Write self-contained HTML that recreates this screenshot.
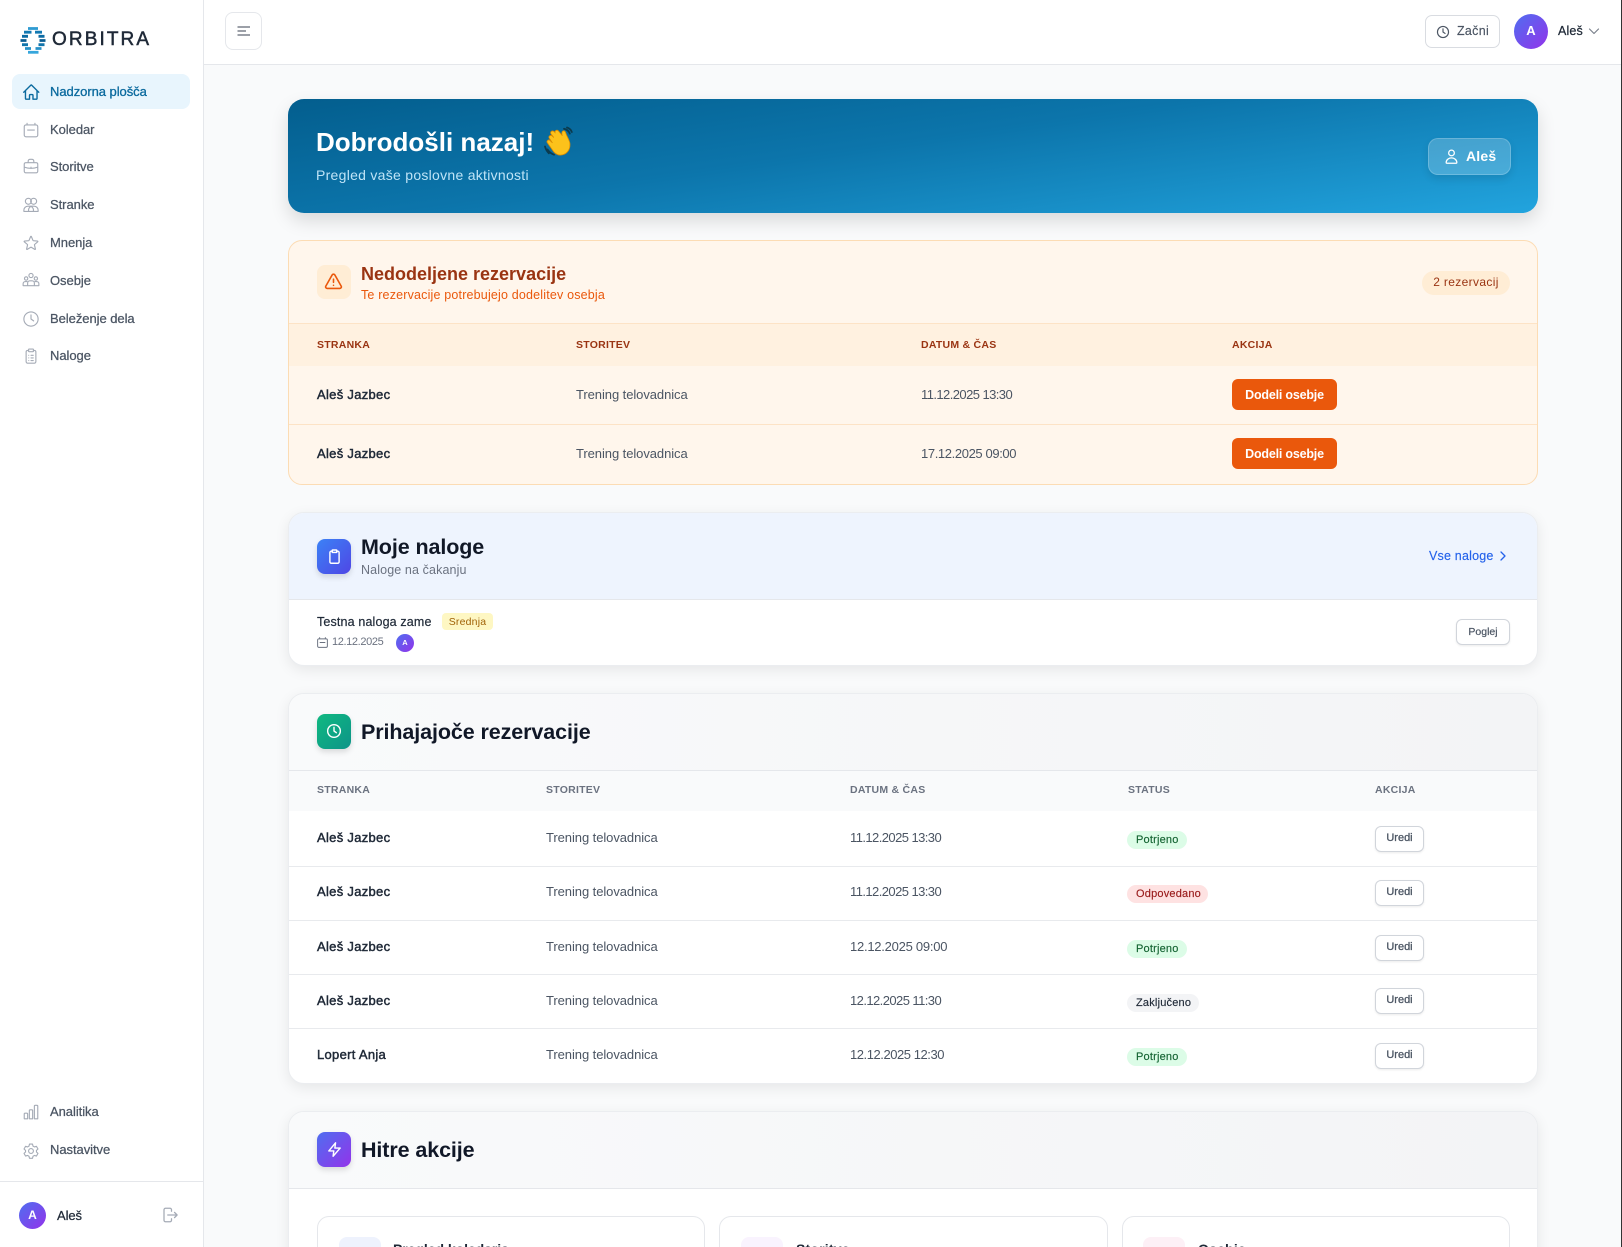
<!DOCTYPE html>
<html lang="sl"><head><meta charset="utf-8"><title>Orbitra</title>
<style>
*{box-sizing:border-box}
html,body{margin:0;padding:0;width:1622px;height:1247px;overflow:hidden;background:#f9fafb;font-family:"Liberation Sans",sans-serif}
#p{position:relative;width:1622px;height:1247px;overflow:hidden}
.a{position:absolute}
.t{position:absolute;white-space:nowrap;line-height:20px;height:20px}
.n{font-size:13px;color:#4b5563;left:50px;letter-spacing:-.05px;font-weight:400;-webkit-text-stroke:.25px #4b5563}
svg{position:absolute;fill:none;stroke-linecap:round;stroke-linejoin:round}
.i{stroke:#a5abb6;stroke-width:1.500}
.card{position:absolute;left:288px;width:1250px;background:#fff;border:1px solid #ebedf0;border-radius:16px;box-shadow:0 4px 14px rgba(0,0,0,.08);overflow:hidden}
.ib{position:absolute;left:317px;width:34px;height:35px;border-radius:8px;box-shadow:0 3px 6px rgba(0,0,0,.13)}
.h2{font-size:21.500px;font-weight:700;color:#111827;left:361px;letter-spacing:-.1px}
.th{font-size:10.500px;font-weight:700;letter-spacing:.25px;color:#6b7280}
.b{font-size:13px;font-weight:400;color:#1f2937;letter-spacing:.3px;left:317px;-webkit-text-stroke:.45px #1f2937}
.c{font-size:13px;color:#4b5563;letter-spacing:-.07px}
.d{position:absolute;height:1px;left:289px;width:1248px;background:#e8eaed}
.pill{position:absolute;left:1127px;height:18px;border-radius:9px;font-size:11px;line-height:18px;padding-left:9px;letter-spacing:.2px;-webkit-text-stroke:.15px currentColor}
.u{position:absolute;left:1375px;width:49px;height:26px;background:#fff;border:1px solid #d1d5db;border-radius:6px;font-size:11px;color:#4b5563;-webkit-text-stroke:.3px #4b5563;text-align:center;line-height:22px;box-shadow:0 1px 2px rgba(0,0,0,.08)}
.o{position:absolute;left:1232px;width:105px;height:31px;background:#ea580c;border-radius:6px;color:#fff;font-size:12.500px;font-weight:700;text-align:center;line-height:32px;letter-spacing:-.2px}
.q{position:absolute;top:1216px;height:60px;background:#fff;border:1px solid #e5e7eb;border-radius:12px}
.qi{position:absolute;top:1237px;width:42px;height:42px;border-radius:8px}
.qt{font-size:14px;font-weight:700;color:#1f2937;top:1239px}
</style></head><body><div id="p">
<svg width="0" height="0"><defs>
<symbol id="home" viewBox="0 0 24 24"><path d="M2.250 12l8.954-8.955c.44-.439 1.152-.439 1.591 0L21.750 12M4.500 9.750v10.125c0 .621.504 1.125 1.125 1.125H9.750v-4.875c0-.621.504-1.125 1.125-1.125h2.250c.621 0 1.125.504 1.125 1.125V21h4.125c.621 0 1.125-.504 1.125-1.125V9.750"/></symbol>
<symbol id="cal" viewBox="0 0 24 24"><path d="M6.750 3v2.250M17.250 3v2.250M5.250 5.250h13.500A2.250 2.250 0 0121 7.500v11.250A2.250 2.250 0 0118.750 21H5.250A2.250 2.250 0 013 18.750V7.500a2.250 2.250 0 012.250-2.250zM7.500 12h9"/></symbol>
<symbol id="brief" viewBox="0 0 24 24"><path d="M5 7.500h14a2 2 0 012 2V19a2 2 0 01-2 2H5a2 2 0 01-2-2V9.500a2 2 0 012-2zM8.250 7.500V5.500a2.500 2.500 0 012.500-2.500h2.500a2.500 2.500 0 012.500 2.500v2M3 13.500c5.500 2 12.500 2 18 0M12 13.500v.5"/></symbol>
<symbol id="users" viewBox="0 0 24 24"><circle cx="8.500" cy="7" r="4"/><circle cx="15.500" cy="7" r="4"/><path d="M2.500 20.500v-1.500a5.500 5.500 0 015.500-5.500h8a5.500 5.500 0 015.500 5.500v1.500zM12 14a5 5 0 00-3 6.500M12 14a5 5 0 013 6.500"/></symbol>
<symbol id="star" viewBox="0 0 24 24"><path d="M11.480 3.500a.56.56 0 011.040 0l2.130 5.110a.56.56 0 00.470.350l5.520.440c.500.040.700.660.320.990l-4.200 3.600a.56.56 0 00-.180.550l1.280 5.380a.56.56 0 01-.840.610l-4.730-2.880a.56.56 0 00-.580 0l-4.730 2.880a.56.56 0 01-.840-.610l1.280-5.380a.56.56 0 00-.180-.550l-4.200-3.600a.56.56 0 01.320-.990l5.520-.440a.56.56 0 00.470-.350z"/></symbol>
<symbol id="team" viewBox="0 0 24 24"><circle cx="12" cy="6" r="2.800"/><circle cx="5.500" cy="10" r="2.200"/><circle cx="18.500" cy="10" r="2.200"/><path d="M7.500 19.500v-3.500a3 3 0 013-3h3a3 3 0 013 3v3.500zM1.500 19.500v-2.500a3 3 0 013-3h2M22.500 19.500v-2.500a3 3 0 00-3-3h-2M1.500 19.500h21"/></symbol>
<symbol id="clock" viewBox="0 0 24 24"><circle cx="12" cy="12" r="9.500"/><path d="M12 6.500V12l3.500 2.500"/></symbol>
<symbol id="clip" viewBox="0 0 24 24"><path d="M9 4.500H7.500a2 2 0 00-2 2V19.500a2 2 0 002 2h9a2 2 0 002-2V6.500a2 2 0 00-2-2H15M9.500 2.800h5a.8.8 0 01.8.8v1.900a.8.8 0 01-.8.8h-5a.8.8 0 01-.8-.8V3.600a.8.8 0 01.8-.8z"/></symbol>
<symbol id="clipl" viewBox="0 0 24 24"><path d="M9 4.500H7.500a2 2 0 00-2 2V19.500a2 2 0 002 2h9a2 2 0 002-2V6.500a2 2 0 00-2-2H15M9.500 2.800h5a.8.8 0 01.8.8v1.900a.8.8 0 01-.8.8h-5a.8.8 0 01-.8-.8V3.600a.8.8 0 01.8-.8zM9 11h.01M12 11h3M9 14.500h.01M12 14.500h3M9 18h.01M12 18h3"/></symbol>
<symbol id="bars" viewBox="0 0 24 24"><path d="M3 14.500a1 1 0 011-1h2.500a1 1 0 011 1V21H3zM9.800 10a1 1 0 011-1h2.400a1 1 0 011 1v11H9.800zM16.500 4a1 1 0 011-1H20a1 1 0 011 1v17h-4.500z"/></symbol>
<symbol id="gear" viewBox="0 0 24 24"><path d="M10 2.800h4l.7 2.700 1.900 1.100 2.700-.8 2 3.500-2 1.900v2.100l2 1.900-2 3.500-2.700-.8-1.900 1.100-.7 2.700h-4l-.7-2.700-1.900-1.100-2.700.8-2-3.500 2-1.900v-2.100l-2-1.900 2-3.500 2.700.8 1.900-1.100z"/><circle cx="12" cy="12" r="3.200"/></symbol>
<symbol id="out" viewBox="0 0 24 24"><path d="M14 7V5a2 2 0 00-2-2H6a2 2 0 00-2 2v14a2 2 0 002 2h6a2 2 0 002-2v-2M9 12h12.500M18 8.500l3.500 3.500-3.500 3.500"/></symbol>
<symbol id="user" viewBox="0 0 24 24"><circle cx="12" cy="7" r="4"/><path d="M4.500 20.500a7.500 6.500 0 0115 0c0 .5-.5 1-1 1h-13c-.5 0-1-.5-1-1z"/></symbol>
</defs></svg>

<!-- sidebar -->
<div class="a" style="left:0;top:0;width:204px;height:1247px;background:#fff;border-right:1px solid #e5e7eb"></div>
<svg style="left:20px;top:27px" width="26" height="27" viewBox="0 0 26 27">
<g stroke-width="2.800" style="stroke-linecap:butt">
<path stroke="#2f9bd2" style="stroke-linecap:butt" d="M8 1.500h10"/>
<path stroke="#1379b2" style="stroke-linecap:butt" d="M4 5.200h7.500M15 5.200h7"/>
<path stroke="#0d6ba3" style="stroke-linecap:butt" d="M2 9.300h6M18.500 9.300h6"/>
<path stroke="#0a5d92" style="stroke-linecap:butt" d="M.5 13.500h6M19.500 13.500h6"/>
<path stroke="#1275ab" style="stroke-linecap:butt" d="M2 17.700h6M18.500 17.700h6"/>
<path stroke="#2590c8" style="stroke-linecap:butt" d="M5 21.500h6M15.500 21.500h6"/>
<path stroke="#36a6dc" style="stroke-linecap:butt" d="M8 25.300h10.500"/>
</g></svg>
<div class="t" style="left:52px;top:29px;line-height:22px;height:22px;font-size:19px;font-weight:400;letter-spacing:2.100px;color:#1f2937;-webkit-text-stroke:.5px #1f2937">ORBITRA</div>

<div class="a" style="left:12px;top:74px;width:178px;height:35px;background:#e8f5fd;border-radius:8px"></div>
<svg style="left:22px;top:83px;stroke:#0b6a9e;stroke-width:1.800" width="18.500" height="18.500"><use href="#home"/></svg>
<div class="t n" style="top:82px;color:#0b6a9e;-webkit-text-stroke:.3px #0b6a9e">Nadzorna plošča</div>

<svg class="i" style="left:22px;top:121px" width="18" height="18"><use href="#cal"/></svg>
<div class="t n" style="top:120px">Koledar</div>
<svg class="i" style="left:22px;top:157px" width="18" height="18"><use href="#brief"/></svg>
<div class="t n" style="top:157px">Storitve</div>
<svg class="i" style="left:22px;top:196px" width="18" height="18"><use href="#users"/></svg>
<div class="t n" style="top:195px">Stranke</div>
<svg class="i" style="left:22px;top:234px" width="18" height="18"><use href="#star"/></svg>
<div class="t n" style="top:233px">Mnenja</div>
<svg class="i" style="left:22px;top:271px" width="18" height="18"><use href="#team"/></svg>
<div class="t n" style="top:271px">Osebje</div>
<svg class="i" style="left:22px;top:310px" width="18" height="18"><use href="#clock"/></svg>
<div class="t n" style="top:309px">Beleženje dela</div>
<svg class="i" style="left:22px;top:347px" width="18" height="18"><use href="#clipl"/></svg>
<div class="t n" style="top:346px">Naloge</div>

<svg class="i" style="left:22px;top:1103px" width="18" height="18"><use href="#bars"/></svg>
<div class="t n" style="top:1102px">Analitika</div>
<svg class="i" style="left:22px;top:1142px" width="18" height="18"><use href="#gear"/></svg>
<div class="t n" style="top:1140px">Nastavitve</div>
<div class="a" style="left:0;top:1181px;width:203px;height:1px;background:#e5e7eb"></div>
<div class="a" style="left:19px;top:1202px;width:27px;height:27px;border-radius:50%;background:linear-gradient(135deg,#4f6ef0,#9333ea);color:#fff;font-size:12px;font-weight:700;text-align:center;line-height:27px">A</div>
<div class="t" style="left:57px;top:1206px;font-size:13px;color:#1f2937;letter-spacing:-.1px;-webkit-text-stroke:.25px #1f2937">Aleš</div>
<svg class="i" style="left:161px;top:1206px;stroke-width:1.700" width="18" height="18"><use href="#out"/></svg>

<!-- top bar -->
<div class="a" style="left:204px;top:0;width:1418px;height:65px;background:#fff;border-bottom:1px solid #e5e7eb"></div>
<div class="a" style="left:225px;top:12px;width:37px;height:38px;background:#fff;border:1px solid #e5e7eb;border-radius:8px"></div>
<svg style="left:236px;top:25px;stroke:#7b818c;stroke-width:1.500" width="16" height="13"><path style="stroke-linecap:butt" d="M1.500 2h12.500M1.500 6h8.500M1.500 10h12.500"/></svg>
<div class="a" style="left:1425px;top:15px;width:75px;height:33px;background:#fff;border:1px solid #d9dce1;border-radius:7px"></div>
<svg style="left:1436px;top:25px;stroke:#4b5563;stroke-width:2" width="14" height="14"><use href="#clock"/></svg>
<div class="t" style="left:1457px;top:21px;font-size:12.500px;color:#4b5563;letter-spacing:.3px;-webkit-text-stroke:.15px #4b5563">Začni</div>
<div class="a" style="left:1514px;top:14px;width:34px;height:35px;border-radius:50%;background:linear-gradient(135deg,#4f6ef0,#9333ea);color:#fff;font-size:13px;font-weight:700;text-align:center;line-height:34px">A</div>
<div class="t" style="left:1558px;top:21px;font-size:12.500px;color:#1f2937;letter-spacing:.15px;-webkit-text-stroke:.25px #1f2937">Aleš</div>
<svg style="left:1588px;top:27px;stroke:#7b818c;stroke-width:1.200" width="12" height="9"><path d="M1.500 2l4.500 4.500L10.500 2"/></svg>

<!-- hero -->
<div class="a" style="left:288px;top:99px;width:1250px;height:114px;border-radius:16px;background:linear-gradient(172deg,#035e8e 0%,#0c75ab 45%,#22a4de 100%);box-shadow:0 8px 18px rgba(0,0,0,.13)"></div>
<div class="t" style="left:316px;top:130px;height:24px;line-height:24px;font-size:26px;font-weight:700;color:#fff;letter-spacing:0">Dobrodošli nazaj!</div>
<svg style="left:543px;top:126px" width="31" height="32" viewBox="0 0 31 32">
<path d="M4.500 23.500c2 3 4 4.300 6.500 5.200M2 20.500c.8 3 2 4.800 3.800 6.800M21 2.800c2.700.4 4.800 2.200 5.800 4.800M24 1.500c2.200.7 4 2.200 4.800 4.500" stroke="#0b3b4e" stroke-width="1.800"/>
<path d="M6.500 12.500c-1.800-2 .9-4 2.700-2.500l1.400 1.300-2.500-3.200c-1.700-2.200 1.300-4.300 3.200-2.300l.9 1.100c-1-2 1.800-3.800 3.400-1.800l3.600 4.400c-.7-2.400-.5-4.100 1-4.600 1.400-.4 2.200.8 2.600 2.200 1.100 3.600 3.700 6.800 4.100 10.300.5 4.900-1.600 9-5.700 10.900-3.800 1.600-7.600.7-10.500-2.500L4.500 17c-1.500-1.900.7-4 2.600-2.400l2.200 2.100z" fill="#fcc21b" stroke="#d98a00" stroke-width=".8"/>
</svg>
<div class="t" style="left:316px;top:165px;font-size:14px;color:#bfe4f7;letter-spacing:.28px">Pregled vaše poslovne aktivnosti</div>
<div class="a" style="left:1428px;top:138px;width:83px;height:37px;border-radius:10px;background:rgba(255,255,255,.2);border:1px solid rgba(255,255,255,.2);box-shadow:0 4px 8px rgba(0,0,0,.1)"></div>
<svg style="left:1443px;top:148px;stroke:#fff;stroke-width:1.800" width="17" height="17"><use href="#user"/></svg>
<div class="t" style="left:1466px;top:146px;font-size:14px;font-weight:700;color:#fff;letter-spacing:.2px">Aleš</div>

<!-- alert card -->
<div class="a" style="left:288px;top:240px;width:1250px;height:245px;background:#fff6ec;border:1px solid #fcdcb4;border-radius:14px"></div>
<div class="a" style="left:317px;top:265px;width:34px;height:34px;border-radius:8px;background:#ffedd5"></div>
<svg style="left:324px;top:272px;stroke:#ea580c;stroke-width:2" width="19" height="19" viewBox="0 0 24 24"><path d="M12 9v4M12 16.800h.01M10.300 3.700L2.300 17.800c-.8 1.300.2 3 1.700 3h16c1.500 0 2.500-1.700 1.700-3L13.700 3.700c-.8-1.300-2.600-1.300-3.400 0z"/></svg>
<div class="t" style="left:361px;top:264px;font-size:18px;font-weight:700;color:#9a3412;letter-spacing:0">Nedodeljene rezervacije</div>
<div class="t" style="left:361px;top:285px;font-size:12.500px;color:#ea580c;letter-spacing:.18px">Te rezervacije potrebujejo dodelitev osebja</div>
<div class="a" style="left:1422px;top:271px;width:88px;height:24px;border-radius:12px;background:#ffedd5;color:#9a3412;font-size:12px;line-height:23px;text-align:center;letter-spacing:.35px">2 rezervacij</div>
<div class="a" style="left:289px;top:323px;width:1248px;height:43px;background:#fff1e0;border-top:1px solid #fde3c6"></div>
<div class="t th" style="left:317px;top:335px;color:#9a3412">STRANKA</div>
<div class="t th" style="left:576px;top:335px;color:#9a3412">STORITEV</div>
<div class="t th" style="left:921px;top:335px;color:#9a3412">DATUM &amp; ČAS</div>
<div class="t th" style="left:1232px;top:335px;color:#9a3412">AKCIJA</div>
<div class="t b" style="top:385px">Aleš Jazbec</div>
<div class="t c" style="left:576px;top:385px">Trening telovadnica</div>
<div class="t c" style="left:921px;top:385px;letter-spacing:-.57px">11.12.2025 13:30</div>
<div class="o" style="top:379px">Dodeli osebje</div>
<div class="a" style="left:289px;top:424px;width:1248px;height:1px;background:#fde3c6"></div>
<div class="t b" style="top:444px">Aleš Jazbec</div>
<div class="t c" style="left:576px;top:444px">Trening telovadnica</div>
<div class="t c" style="left:921px;top:444px;letter-spacing:-.38px">17.12.2025 09:00</div>
<div class="o" style="top:438px">Dodeli osebje</div>

<!-- tasks -->
<div class="card" style="top:512px;height:154px"><div class="a" style="left:0;top:0;width:100%;height:87px;background:#eef4fe;border-bottom:1px solid #e5e7eb"></div></div>
<div class="ib" style="top:539px;background:linear-gradient(135deg,#3b82f6,#4f46e5)"></div>
<svg style="left:326px;top:548px;stroke:#fff;stroke-width:2" width="17" height="17"><use href="#clip"/></svg>
<div class="t h2" style="top:537px">Moje naloge</div>
<div class="t" style="left:361px;top:560px;font-size:12.500px;color:#6b7280;letter-spacing:.12px">Naloge na čakanju</div>
<div class="t" style="left:1429px;top:546px;font-size:12.500px;color:#2563eb;letter-spacing:.2px;-webkit-text-stroke:.15px #2563eb">Vse naloge</div>
<svg style="left:1498px;top:550px;stroke:#2563eb;stroke-width:1.300" width="10" height="12"><path d="M3 2l4 4-4 4"/></svg>
<div class="t" style="left:317px;top:612px;font-size:12.500px;color:#1f2937;letter-spacing:.15px;-webkit-text-stroke:.2px #1f2937">Testna naloga zame</div>
<div class="a" style="left:442px;top:613px;width:51px;height:17px;background:#fef7c3;border-radius:4px;color:#a16207;font-size:10.500px;line-height:19px;text-align:center;letter-spacing:.2px">Srednja</div>
<svg style="left:316px;top:636px;stroke:#6b7280;stroke-width:1.800" width="13" height="13"><use href="#cal"/></svg>
<div class="t" style="left:332px;top:632px;font-size:11px;color:#6b7280;letter-spacing:-.37px">12.12.2025</div>
<div class="a" style="left:396px;top:634px;width:18px;height:18px;border-radius:50%;background:linear-gradient(135deg,#4f6ef0,#9333ea);color:#fff;font-size:7.500px;font-weight:700;text-align:center;line-height:17px">A</div>
<div class="u" style="left:1456px;top:619px;width:54px;height:26px;line-height:25px;font-size:10.500px;-webkit-text-stroke:.2px #4b5563">Poglej</div>

<!-- upcoming -->
<div class="card" style="top:693px;height:391px"><div class="a" style="left:0;top:0;width:100%;height:77px;background:linear-gradient(90deg,#f9fafb,#f3f4f6);border-bottom:1px solid #e5e7eb"></div><div class="a" style="left:0;top:77px;width:100%;height:40px;background:#f9fafb"></div></div>
<div class="ib" style="top:714px;background:linear-gradient(135deg,#10b981,#0d9488)"></div>
<svg style="left:326px;top:723px;stroke:#fff;stroke-width:2.100" width="16" height="16"><use href="#clock"/></svg>
<div class="t h2" style="top:722px">Prihajajoče rezervacije</div>
<div class="t th" style="left:317px;top:780px">STRANKA</div>
<div class="t th" style="left:546px;top:780px">STORITEV</div>
<div class="t th" style="left:850px;top:780px">DATUM &amp; ČAS</div>
<div class="t th" style="left:1128px;top:780px">STATUS</div>
<div class="t th" style="left:1375px;top:780px">AKCIJA</div>

<div class="t b" style="top:828px">Aleš Jazbec</div><div class="t c" style="left:546px;top:828px">Trening telovadnica</div><div class="t c" style="left:850px;top:828px;letter-spacing:-.57px">11.12.2025 13:30</div>
<div class="pill" style="top:831px;width:60px;background:#dcfce7;color:#166534">Potrjeno</div><div class="u" style="top:826px">Uredi</div>
<div class="d" style="top:866px"></div>
<div class="t b" style="top:882px">Aleš Jazbec</div><div class="t c" style="left:546px;top:882px">Trening telovadnica</div><div class="t c" style="left:850px;top:882px;letter-spacing:-.57px">11.12.2025 13:30</div>
<div class="pill" style="top:885px;width:81px;background:#fee2e2;color:#991b1b">Odpovedano</div><div class="u" style="top:880px">Uredi</div>
<div class="d" style="top:920px"></div>
<div class="t b" style="top:937px">Aleš Jazbec</div><div class="t c" style="left:546px;top:937px">Trening telovadnica</div><div class="t c" style="left:850px;top:937px;letter-spacing:-.25px">12.12.2025 09:00</div>
<div class="pill" style="top:940px;width:60px;background:#dcfce7;color:#166534">Potrjeno</div><div class="u" style="top:935px">Uredi</div>
<div class="d" style="top:974px"></div>
<div class="t b" style="top:991px">Aleš Jazbec</div><div class="t c" style="left:546px;top:991px">Trening telovadnica</div><div class="t c" style="left:850px;top:991px;letter-spacing:-.57px">12.12.2025 11:30</div>
<div class="pill" style="top:994px;width:72px;background:#f3f4f6;color:#1f2937">Zaključeno</div><div class="u" style="top:988px">Uredi</div>
<div class="d" style="top:1028px"></div>
<div class="t b" style="top:1045px">Lopert Anja</div><div class="t c" style="left:546px;top:1045px">Trening telovadnica</div><div class="t c" style="left:850px;top:1045px;letter-spacing:-.45px">12.12.2025 12:30</div>
<div class="pill" style="top:1048px;width:60px;background:#dcfce7;color:#166534">Potrjeno</div><div class="u" style="top:1043px">Uredi</div>

<!-- quick -->
<div class="card" style="top:1111px;height:160px"><div class="a" style="left:0;top:0;width:100%;height:77px;background:linear-gradient(90deg,#f9fafb,#f3f4f6);border-bottom:1px solid #e5e7eb"></div></div>
<div class="ib" style="top:1132px;background:linear-gradient(135deg,#4f6ef0,#9333ea)"></div>
<svg style="left:326px;top:1141px;stroke:#fff;stroke-width:2" width="17" height="17" viewBox="0 0 24 24"><path d="M13.500 2.500L4 14h7l-1 7.500L20 10h-7.500z"/></svg>
<div class="t h2" style="top:1140px">Hitre akcije</div>
<div class="q" style="left:317px;width:388px"></div>
<div class="qi" style="left:339px;background:#eef2fd"></div>
<div class="t qt" style="left:393px;letter-spacing:-.05px">Pregled koledarja</div>
<div class="q" style="left:719px;width:389px"></div>
<div class="qi" style="left:741px;background:#f9f3fe"></div>
<div class="t qt" style="left:796px;letter-spacing:.2px">Storitve</div>
<div class="q" style="left:1122px;width:388px"></div>
<div class="qi" style="left:1143px;background:#fdf0f6"></div>
<div class="t qt" style="left:1198px;letter-spacing:.2px">Osebje</div>

<div class="a" style="left:1621px;top:0;width:1px;height:1247px;background:#333"></div>
</div></body></html>
